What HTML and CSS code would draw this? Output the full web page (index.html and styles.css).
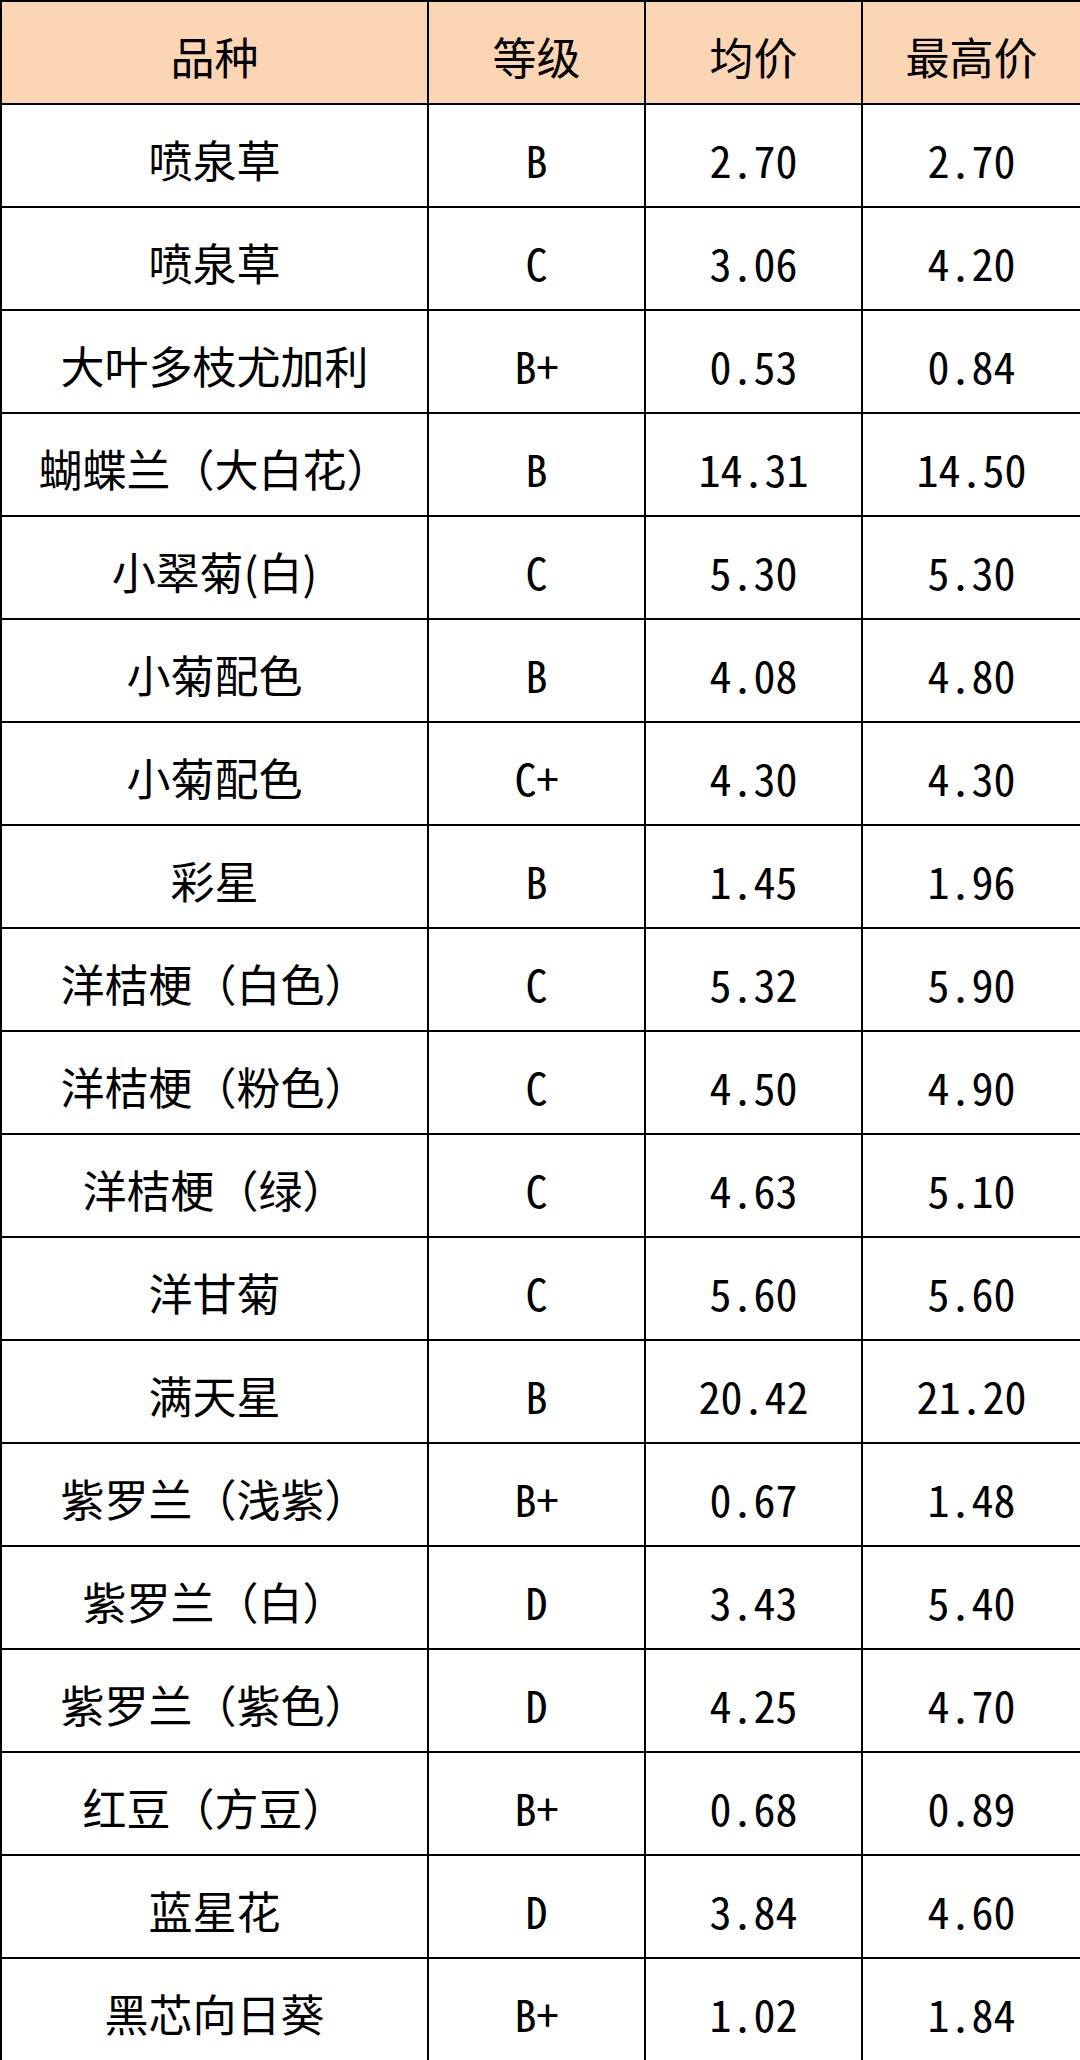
FILE: index.html
```html
<!DOCTYPE html>
<html lang="zh-CN">
<head>
<meta charset="utf-8">
<title>价格表</title>
<link rel="stylesheet" href="styles.css">
</head>
<body>
<table class="price-table">
  <colgroup>
    <col class="c-name">
    <col class="c-grade">
    <col class="c-avg">
    <col class="c-max">
  </colgroup>
  <thead>
    <tr><th>品种</th><th>等级</th><th>均价</th><th>最高价</th></tr>
  </thead>
  <tbody>
    <tr><td>喷泉草</td><td class="num">B</td><td class="num">2.70</td><td class="num">2.70</td></tr>
    <tr><td>喷泉草</td><td class="num">C</td><td class="num">3.06</td><td class="num">4.20</td></tr>
    <tr><td>大叶多枝尤加利</td><td class="num">B+</td><td class="num">0.53</td><td class="num">0.84</td></tr>
    <tr><td>蝴蝶兰（大白花）</td><td class="num">B</td><td class="num">14.31</td><td class="num">14.50</td></tr>
    <tr><td>小翠菊(白)</td><td class="num">C</td><td class="num">5.30</td><td class="num">5.30</td></tr>
    <tr><td>小菊配色</td><td class="num">B</td><td class="num">4.08</td><td class="num">4.80</td></tr>
    <tr><td>小菊配色</td><td class="num">C+</td><td class="num">4.30</td><td class="num">4.30</td></tr>
    <tr><td>彩星</td><td class="num">B</td><td class="num">1.45</td><td class="num">1.96</td></tr>
    <tr><td>洋桔梗（白色）</td><td class="num">C</td><td class="num">5.32</td><td class="num">5.90</td></tr>
    <tr><td>洋桔梗（粉色）</td><td class="num">C</td><td class="num">4.50</td><td class="num">4.90</td></tr>
    <tr><td>洋桔梗（绿）</td><td class="num">C</td><td class="num">4.63</td><td class="num">5.10</td></tr>
    <tr><td>洋甘菊</td><td class="num">C</td><td class="num">5.60</td><td class="num">5.60</td></tr>
    <tr><td>满天星</td><td class="num">B</td><td class="num">20.42</td><td class="num">21.20</td></tr>
    <tr><td>紫罗兰（浅紫）</td><td class="num">B+</td><td class="num">0.67</td><td class="num">1.48</td></tr>
    <tr><td>紫罗兰（白）</td><td class="num">D</td><td class="num">3.43</td><td class="num">5.40</td></tr>
    <tr><td>紫罗兰（紫色）</td><td class="num">D</td><td class="num">4.25</td><td class="num">4.70</td></tr>
    <tr><td>红豆（方豆）</td><td class="num">B+</td><td class="num">0.68</td><td class="num">0.89</td></tr>
    <tr><td>蓝星花</td><td class="num">D</td><td class="num">3.84</td><td class="num">4.60</td></tr>
    <tr><td>黑芯向日葵</td><td class="num">B+</td><td class="num">1.02</td><td class="num">1.84</td></tr>
  </tbody>
</table>
</body>
</html>
```
FILE: styles.css
```css
html, body {
  margin: 0;
  padding: 0;
  background: #ffffff;
}

.price-table {
  width: 1080px;
  border-collapse: collapse;
  table-layout: fixed;
  font-family: "Noto Sans CJK SC", "Noto Sans", sans-serif;
  font-size: 44px;
  color: #000000;
}

.c-name { width: 427px; }
.c-grade { width: 217px; }
.c-avg { width: 217px; }
.c-max { width: 219px; }

.price-table th,
.price-table td {
  border: 2px solid #000000;
  height: 103px;
  padding: 6px 0 0 0;
  text-align: center;
  vertical-align: middle;
  font-weight: normal;
  line-height: 1;
  box-sizing: border-box;
  white-space: nowrap;
}

.price-table th {
  background: #fcd5b4;
}

.price-table td.num {
  font-family: "Noto Sans Mono CJK SC", "DejaVu Sans Mono", monospace;
  font-size: 44px;
  font-weight: 300;
}
```
